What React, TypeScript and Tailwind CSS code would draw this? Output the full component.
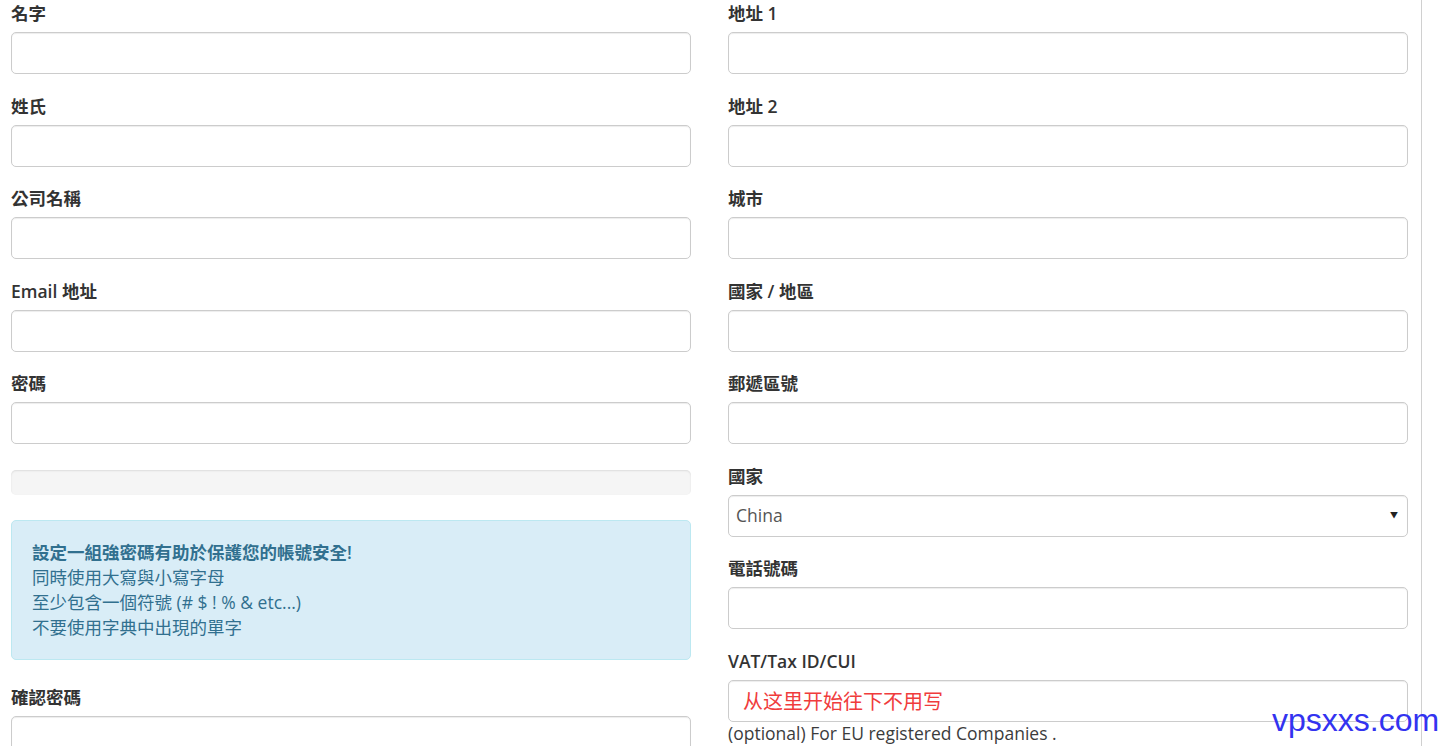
const font = { fontFamily: '"Open Sans", "Noto Sans CJK TC", sans-serif' };

function Label({ text }: { text: string }) {
  return (
    <label className="mb-[6px] block h-[25px] text-[17.5px] font-semibold leading-[25px] text-[#333]">
      {text}
    </label>
  );
}

function Field({ label, children }: { label: string; children?: React.ReactNode }) {
  return (
    <div className="mb-[19.5px]">
      <Label text={label} />
      {children ?? <TextInput />}
    </div>
  );
}

function TextInput({ children }: { children?: React.ReactNode }) {
  return (
    <div className="flex h-[42px] w-full items-center rounded-[5px] border border-[#ccc] bg-white px-[14px] shadow-[inset_0_1px_1px_rgba(0,0,0,0.075)]">
      {children}
    </div>
  );
}

export default function App() {
  return (
    <div className="relative h-[746px] w-[1448px] overflow-hidden bg-white" style={font}>
      <div className="flex h-full">
        <div className="grid w-[1408px] grid-cols-2 gap-x-[37px] pl-[11px] pt-[1px]">
          {/* left column */}
          <div>
            <Field label="名字" />
            <Field label="姓氏" />
            <Field label="公司名稱" />
            <Field label="Email 地址" />
            <div className="mb-[26px]">
              <Label text="密碼" />
              <TextInput />
            </div>
            <div className="mb-[25px] h-[25px] rounded-[5px] bg-[#f5f5f5] shadow-[inset_0_1px_2px_rgba(0,0,0,0.1)]" />
            <div className="mb-[25px] h-[139.5px] rounded-[5px] border border-[#bce8f1] bg-[#d9edf7] px-[20px] py-[19px] text-[17.5px] leading-[25px] text-[#31708f]">
              <p className="font-semibold">設定一組強密碼有助於保護您的帳號安全!</p>
              <p>同時使用大寫與小寫字母</p>
              <p>至少包含一個符號 (# $ ! % &amp; etc...)</p>
              <p>不要使用字典中出現的單字</p>
            </div>
            <Field label="確認密碼" />
          </div>

          {/* right column */}
          <div>
            <Field label="地址 1" />
            <Field label="地址 2" />
            <Field label="城市" />
            <Field label="國家 / 地區" />
            <Field label="郵遞區號" />
            <Field label="國家">
              <div className="relative flex h-[42px] w-full items-center rounded-[5px] border border-[#ccc] bg-white pl-[7px] shadow-[inset_0_1px_1px_rgba(0,0,0,0.075)]">
                <span className="text-[17.5px] text-[#555]">China</span>
                <span className="absolute right-[9px] top-[15px] text-[8px] leading-none text-[#222]">▼</span>
              </div>
            </Field>
            <Field label="電話號碼" />
            <div>
              <Label text="VAT/Tax ID/CUI" />
              <TextInput>
                <span
                  className="text-[20px] leading-none text-[#f03c3c]"
                  style={{ fontFamily: '"Noto Sans CJK SC", sans-serif' }}
                >
                  从这里开始往下不用写
                </span>
              </TextInput>
              <p className="text-[17.5px] leading-[23px] text-[#3c3c3c]">
                (optional) For EU registered Companies .
              </p>
            </div>
          </div>
        </div>
        <div className="ml-[13px] h-full w-px bg-[#d0d0d0]" />
      </div>

      <div
        className="absolute left-[1272px] top-[704px] text-[32px] leading-none text-[#3333f0]"
        style={{ fontFamily: '"Liberation Sans", Arial, sans-serif' }}
      >
        vpsxxs.com
      </div>
    </div>
  );
}
